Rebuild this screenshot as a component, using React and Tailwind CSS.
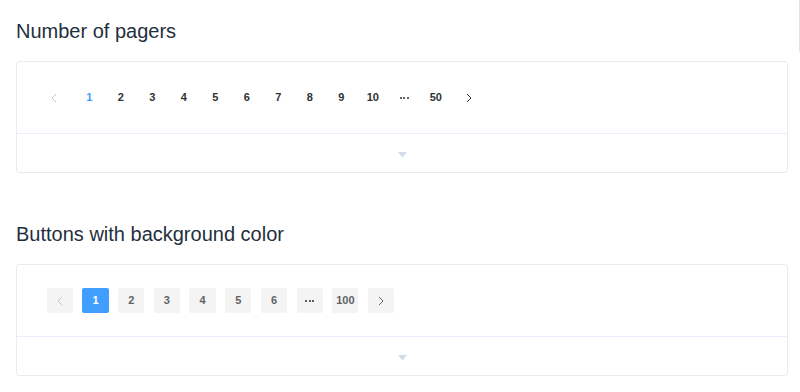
import React from "react";

const font = { fontFamily: '"Liberation Sans", Arial, sans-serif' };

const Chevron = ({ dir = "left", className = "" }) => (
  <svg width="6" height="10" viewBox="0 0 6 10" className={className}>
    <path
      d={dir === "left" ? "M5 1 L1 5 L5 9" : "M1 1 L5 5 L1 9"}
      fill="none"
      stroke="currentColor"
      strokeWidth="1"
    />
  </svg>
);

const Caret = () => (
  <svg width="9" height="6" viewBox="0 0 9 6" className="mt-[3px]">
    <path d="M0 0 L9 0 L4.5 5.5 Z" fill="#d3dce6" />
  </svg>
);

const Dots = ({ color }) => (
  <span className="flex gap-[1.5px] justify-center items-center">
    <span className={"w-[2px] h-[2px] rounded-full " + color} />
    <span className={"w-[2px] h-[2px] rounded-full " + color} />
    <span className={"w-[2px] h-[2px] rounded-full " + color} />
  </span>
);

const DemoBlock = ({ children }) => (
  <div className="border border-[#ebebeb] rounded-[3px] bg-white">
    <div className="h-[71px] flex items-center">{children}</div>
    <div className="h-[39px] border-t border-[#eaeefb] flex items-center justify-center">
      <Caret />
    </div>
  </div>
);

const SimplePager = () => {
  const pages = ["1", "2", "3", "4", "5", "6", "7", "8", "9", "10", "...", "50"];
  return (
    <div className="flex items-center pl-[23px] h-[28px]">
      <div className="w-[28px] flex justify-center text-[#c0c4cc]">
        <Chevron dir="left" />
      </div>
      <ul className="flex ml-[5.5px]">
        {pages.map((p, i) => (
          <li
            key={i}
            className={
              "w-[31.5px] h-[28px] flex items-center justify-center text-[11px] font-bold " +
              (i === 0 ? "text-[#409eff]" : "text-[#303133]")
            }
          >
            {p === "..." ? <Dots color="bg-[#303133]" /> : p}
          </li>
        ))}
      </ul>
      <div className="w-[28px] ml-[3.5px] flex justify-center text-[#303133]">
        <Chevron dir="right" />
      </div>
    </div>
  );
};

const BgPager = () => {
  const pages = ["1", "2", "3", "4", "5", "6", "...", "100"];
  return (
    <div className="flex items-center gap-[9.4px] pl-[29.7px]">
      <div className="w-[26.3px] h-[25px] rounded-[2px] bg-[#f4f4f5] flex items-center justify-center text-[#c0c4cc]">
        <Chevron dir="left" />
      </div>
      {pages.map((p, i) => (
        <div
          key={i}
          className={
            "w-[26.3px] h-[25px] rounded-[2px] flex items-center justify-center text-[11px] font-semibold " +
            (i === 0 ? "bg-[#409eff] text-white" : "bg-[#f4f4f5] text-[#606266]")
          }
        >
          {p === "..." ? <Dots color="bg-[#303133]" /> : p}
        </div>
      ))}
      <div className="w-[26.3px] h-[25px] rounded-[2px] bg-[#f4f4f5] flex items-center justify-center text-[#606266]">
        <Chevron dir="right" />
      </div>
    </div>
  );
};

export default function App() {
  return (
    <div className="relative w-[800px] h-[392px] bg-white overflow-hidden" style={font}>
      <div className="pl-[16px] pr-[12px]">
        <h3 className="mt-[19px] text-[20px] leading-[24px] font-normal text-[#1f2f3d]">
          Number of pagers
        </h3>
        <div className="mt-[18px]">
          <DemoBlock>
            <SimplePager />
          </DemoBlock>
        </div>
        <h3 className="mt-[49px] text-[20px] leading-[24px] font-normal text-[#1f2f3d]">
          Buttons with background color
        </h3>
        <div className="mt-[18px]">
          <DemoBlock>
            <BgPager />
          </DemoBlock>
        </div>
      </div>
      <div className="absolute right-0 top-0 w-px h-[52px] bg-[#e4e4e4]" />
    </div>
  );
}
